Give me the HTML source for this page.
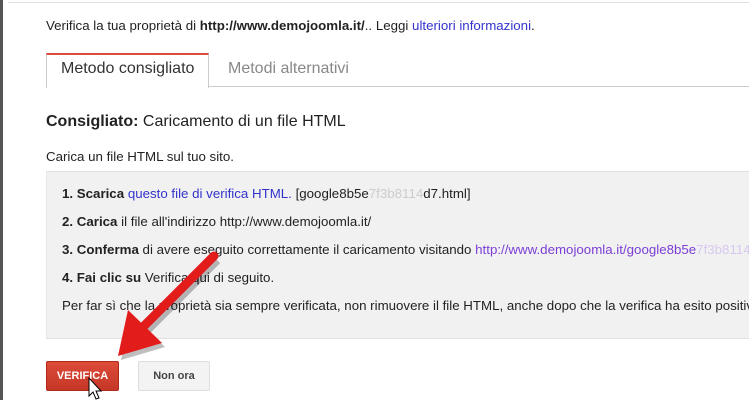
<!DOCTYPE html>
<html><head><style>
body{margin:0;width:749px;height:400px;overflow:hidden;background:#fff;font-family:"Liberation Sans",Arial,sans-serif;color:#222;position:relative}
.a{position:absolute;white-space:nowrap}
b{color:#222}
.l{color:#3333cc}
.v{color:#7b3fd6}
.t{font-size:13.3px}
</style></head><body>
<div class="a" style="left:0;top:0;width:3px;height:400px;background:#555"></div>
<div class="a" style="left:8px;top:2px;width:741px;height:1px;background:#e0e0e0"></div>
<div class="a t" style="left:46px;top:18px">Verifica la tua proprietà di <b>http://www.demojoomla.it/</b>.. Leggi <span class="l">ulteriori informazioni</span>.</div>
<div class="a" style="left:46px;top:53px;width:161px;height:33px;border:1px solid #ccc;border-top:2px solid #dd4b39;border-bottom:none;background:#fff;z-index:2"></div>
<div class="a" style="left:46px;top:86px;width:703px;height:1px;background:#ccc"></div>
<div class="a" style="left:61px;top:60px;font-size:16px;color:#333;z-index:3">Metodo consigliato</div>
<div class="a" style="left:228px;top:60px;font-size:16px;color:#888">Metodi alternativi</div>
<div class="a" style="left:46px;top:113px;font-size:16px;color:#222"><b>Consigliato:</b> Caricamento di un file HTML</div>
<div class="a t" style="left:46px;top:149px">Carica un file HTML sul tuo sito.</div>
<div class="a" style="left:46px;top:171px;width:703px;height:166px;background:#f1f1f1;border-top:1px solid #e0e0e0;border-bottom:1px solid #e0e0e0;border-left:1px solid #e8e8e8;overflow:hidden">
<div class="a t" style="left:15px;top:14px"><b>1. Scarica</b> <span class="l">questo file di verifica HTML.</span> [google8b5e<span style="color:#ccc">7f3b8114</span>d7.html]</div>
<div class="a t" style="left:15px;top:42px"><b>2. Carica</b> il file all'indirizzo http://www.demojoomla.it/</div>
<div class="a t" style="left:15px;top:70px"><b>3. Conferma</b> di avere eseguito correttamente il caricamento visitando <span class="v">http://www.demojoomla.it/google8b5e<span style="color:#d8c8f0">7f3b8114</span>f4d7.html</span></div>
<div class="a t" style="left:15px;top:98px"><b>4. Fai clic su</b> Verifica qui di seguito.</div>
<div class="a t" style="left:15px;top:126px">Per far sì che la proprietà sia sempre verificata, non rimuovere il file HTML, anche dopo che la verifica ha esito positivo.</div>
</div>
<div class="a" style="left:46px;top:361px;width:71px;height:28px;background:linear-gradient(#dd4b39,#c53727);border:1px solid #b0281a;border-radius:2px;color:#fff;font-weight:bold;font-size:11px;text-align:center;line-height:28px">VERIFICA</div>
<div class="a" style="left:138px;top:361px;width:70px;height:28px;background:#f3f3f3;border:1px solid #ddd;border-radius:2px;color:#444;font-weight:bold;font-size:11px;text-align:center;line-height:28px">Non ora</div>
<svg class="a" style="left:0;top:0" width="749" height="400">
<g transform="translate(3,4)" fill="#000" opacity=".25">
<line x1="214" y1="256" x2="140" y2="330" stroke="#000" stroke-width="9"/>
<polygon points="118,356 128,310 162,343"/>
</g>
<line x1="214" y1="256" x2="140" y2="330" stroke="#e21b1b" stroke-width="9" stroke-linecap="round"/>
<polygon points="118,356 128,310 162,343" fill="#e21b1b"/>
<path d="M89 378 L89 396 L93 392 L96 399 L99 398 L96 391 L101 391 Z" fill="#fff" stroke="#000" stroke-width="1"/>
</svg>
</body></html>
